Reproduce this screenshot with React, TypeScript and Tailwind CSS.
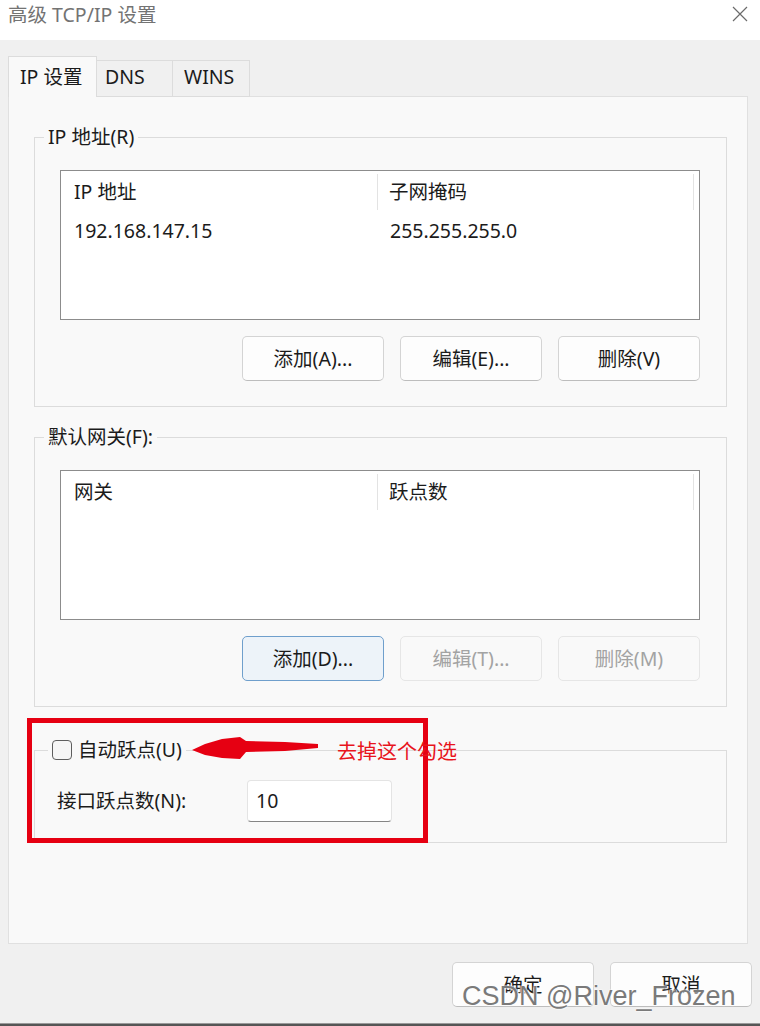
import React from "react";

type BtnKind = "normal" | "default" | "disabled";

function DlgButton({ label, kind = "normal" }: { label: string; kind?: BtnKind }) {
  const look =
    kind === "default"
      ? "border-[#6f9fcc] bg-[#edf3f9] text-[#1b1b1b]"
      : kind === "disabled"
        ? "border-[#e6e6e6] bg-[#f9f9f9] text-[#a3a3a3]"
        : "border-[#d4d4d4] border-b-[#bdbdbd] bg-[#fdfdfd] text-[#1b1b1b]";
  return (
    <button
      className={`h-[45px] w-[142px] rounded-[5px] border text-[19.5px] leading-none ${look}`}
    >
      {label}
    </button>
  );
}

function ListView({ cols, rows }: { cols: [string, string]; rows: [string, string][] }) {
  return (
    <div className="h-[150px] border border-[#8c8c8c] bg-white text-[#1b1b1b]">
      <div className="flex h-[42px] items-center">
        <div className="flex h-[36px] w-[317px] items-center border-r border-[#e3e3e3] pl-[13px]">
          {cols[0]}
        </div>
        <div className="flex h-[36px] flex-1 items-center pl-[11px]">{cols[1]}</div>
        <div className="mr-[5px] h-[36px] w-px bg-[#e3e3e3]" />
      </div>
      {rows.map(([a, b]) => (
        <div key={a} className="flex h-[36px] items-center">
          <div className="w-[318px] pl-[13px]">{a}</div>
          <div className="pl-[11px]">{b}</div>
        </div>
      ))}
    </div>
  );
}

function Group({ legend, children }: { legend: React.ReactNode; children: React.ReactNode }) {
  return (
    <fieldset className="border border-[#dcdcdc] p-0">
      <legend className="ml-[9px] px-[4px] leading-[26px]">{legend}</legend>
      {children}
    </fieldset>
  );
}

export default function App() {
  return (
    <div className="relative flex h-[1026px] w-[760px] flex-col overflow-hidden bg-[#f0f0f0] font-['Noto_Sans','Noto_Sans_CJK_SC',sans-serif] text-[19.5px] leading-[26px] text-[#1b1b1b]">
      {/* title bar */}
      <div className="flex h-[40px] shrink-0 items-start justify-between bg-white pl-[8px] pr-[12px] pt-[2px]">
        <span className="text-[#737373]">高级 TCP/IP 设置</span>
        <svg width="16" height="16" viewBox="0 0 16 16" className="mt-[4px]">
          <path d="M1 1 L15 15 M15 1 L1 15" stroke="#6b6b6b" strokeWidth="1.2" fill="none" />
        </svg>
      </div>

      {/* tabs */}
      <div className="relative z-10 -mb-px flex h-[57px] shrink-0 items-end pl-[8px]">
        <div className="h-[41px] w-[89px] border border-b-0 border-[#dcdcdc] bg-[#f9f9f9] pl-[11px] pt-[7px]">
          IP 设置
        </div>
        <div className="h-[37px] w-[76px] border-y border-r border-[#dcdcdc] bg-[#f0f0f0] pl-[8px] pt-[3px]">
          DNS
        </div>
        <div className="h-[37px] w-[77px] border-y border-r border-[#dcdcdc] bg-[#f0f0f0] pl-[11px] pt-[3px]">
          WINS
        </div>
      </div>

      {/* tab page */}
      <div className="ml-[8px] h-[848px] w-[740px] shrink-0 border border-[#e0e0e0] bg-[#f9f9f9] pl-[25px] pr-[20px] pt-[27px]">
        <Group legend="IP 地址(R)">
          <div className="pb-[25px] pl-[25px] pr-[26px] pt-[20px]">
            <ListView cols={["IP 地址", "子网掩码"]} rows={[["192.168.147.15", "255.255.255.0"]]} />
            <div className="mt-[16px] flex justify-end gap-[16px]">
              <DlgButton label="添加(A)..." />
              <DlgButton label="编辑(E)..." />
              <DlgButton label="删除(V)" />
            </div>
          </div>
        </Group>

        <div className="mt-[17px]">
          <Group legend="默认网关(F):">
            <div className="pb-[25px] pl-[25px] pr-[26px] pt-[20px]">
              <ListView cols={["网关", "跃点数"]} rows={[]} />
              <div className="mt-[16px] flex justify-end gap-[16px]">
                <DlgButton label="添加(D)..." kind="default" />
                <DlgButton label="编辑(T)..." kind="disabled" />
                <DlgButton label="删除(M)" kind="disabled" />
              </div>
            </div>
          </Group>
        </div>

        <div className="mt-[30px]">
          <fieldset className="border border-[#dcdcdc] p-0">
            <legend className="ml-[13px] flex items-center gap-[6px] pl-[4px] pr-[4px] leading-[26px]">
              <span className="h-[20px] w-[20px] rounded-[4px] border-[1.5px] border-[#5e5e5e] bg-[#f6f6f6]" />
              <span>自动跃点(U)</span>
            </legend>
            <div className="flex items-center pb-[20px] pl-[22px] pt-[17px]">
              <span className="w-[190px]">接口跃点数(N):</span>
              <div className="flex h-[42px] w-[145px] items-center rounded-[4px] border border-[#e4e4e4] border-b-[#858585] bg-white pl-[8px]">
                10
              </div>
            </div>
          </fieldset>
        </div>
      </div>

      {/* dialog buttons */}
      <div className="mt-[18px] flex shrink-0 justify-end gap-[16px] pr-[8px]">
        <DlgButton label="确定" />
        <DlgButton label="取消" />
      </div>

      <div className="mt-auto h-[3px] shrink-0 border-t border-[#9a9a9a] bg-[#555]" />

      {/* red annotation */}
      <div className="absolute left-[27px] top-[718px] h-[125px] w-[401px] border-[5px] border-[#e60012]" />
      <svg className="absolute left-[188px] top-[732px]" width="134" height="40" viewBox="188 732 134 40">
        <polygon
          points="192,750 205,744 222,739 240,737 246,741 285,742 318,744 318,748 285,751 246,752 240,759 222,758 205,755"
          fill="#e60012"
        />
      </svg>
      <span className="absolute left-[337px] top-[739px] text-[20px] text-[#e8141c]">去掉这个勾选</span>

      {/* watermark */}
      <span className="absolute left-[462px] top-[983px] font-['Liberation_Sans',Arial,sans-serif] text-[27px] leading-none text-[#7a7a7a] [text-shadow:0_0_2px_#fff,0_0_2px_#fff,0_0_1px_#fff]">
        CSDN @River_Frozen
      </span>
    </div>
  );
}
